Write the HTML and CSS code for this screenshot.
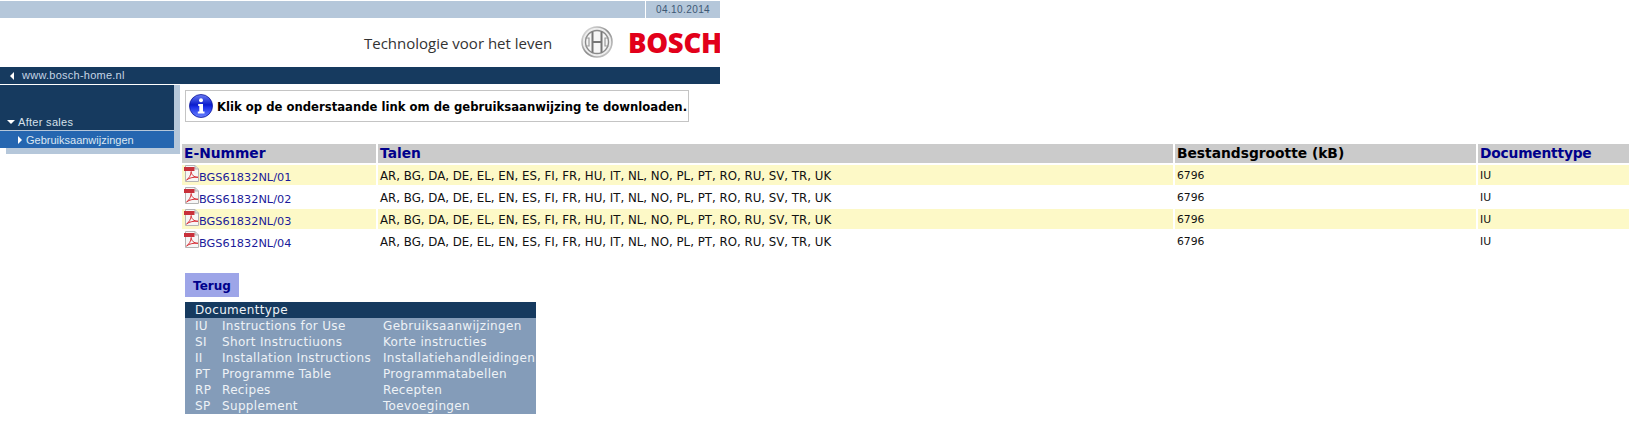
FILE: index.html
```html
<!DOCTYPE html>
<html lang="nl">
<head>
<meta charset="utf-8">
<title>Gebruiksaanwijzingen</title>
<link rel="stylesheet" href="styles.css">
</head>
<body>
<header class="header">
  <div class="datebar"><span class="date">04.10.2014</span></div>
  <div class="brand">
    <span class="slogan">Technologie voor het leven</span>
    <svg class="armature" viewBox="0 0 32 32" aria-hidden="true">
      <defs>
        <linearGradient id="ring" x1="0" y1="0" x2="1" y2="1">
          <stop offset="0" stop-color="#ececec"/><stop offset=".5" stop-color="#8c8c8c"/><stop offset="1" stop-color="#d4d4d4"/>
        </linearGradient>
      </defs>
      <circle cx="16" cy="16" r="15" fill="#ededed" stroke="url(#ring)" stroke-width="1.600"/>
      <circle cx="16" cy="16" r="11.500" fill="#f6f6f6" stroke="#8a8a8a" stroke-width="1.400"/>
      <path d="M11.500 5.500V26.500M20.500 5.500V26.500M11.500 16H20.500" fill="none" stroke="#777" stroke-width="2"/>
      <path d="M4.500 12H8V20H4.500M27.500 12H24V20H27.500" fill="none" stroke="#999" stroke-width="1.200"/>
    </svg>
    <span class="logo">BOSCH</span>
  </div>
  <nav class="sitebar"><span class="arrow-left"></span><a class="sitelink">www.bosch-home.nl</a></nav>
</header>
<div class="main">
  <aside class="side">
    <div class="menu">
      <div class="menu-head"><span class="arrow-down"></span><span class="menu-label">After sales</span></div>
      <div class="menu-item"><span class="arrow-right"></span><span>Gebruiksaanwijzingen</span></div>
    </div>
  </aside>
  <main class="content">
    <div class="notice">
      <svg class="info" viewBox="0 0 24 24" aria-hidden="true">
        <defs>
          <linearGradient id="blue" x1="0" y1="0" x2="0" y2="1">
            <stop offset="0" stop-color="#6a7cf4"/><stop offset=".45" stop-color="#0a1ccc"/><stop offset=".55" stop-color="#1c30e8"/><stop offset="1" stop-color="#6a84ff"/>
          </linearGradient>
        </defs>
        <circle cx="12" cy="12" r="11.500" fill="url(#blue)" stroke="#10189a" stroke-width=".8"/>
        <circle cx="12" cy="6.200" r="2" fill="#fff"/>
        <path d="M9.200 10H14V17.500H15.500V19.500H8.800V17.500H10.300V12H9.200Z" fill="#fff"/>
      </svg>
      <b class="notice-text">Klik op de onderstaande link om de gebruiksaanwijzing te downloaden.</b>
    </div>
    <table class="files">
      <colgroup><col class="c1"><col class="c2"><col class="c3"><col class="c4"></colgroup>
      <thead>
        <tr><th class="link">E-Nummer</th><th class="link">Talen</th><th>Bestandsgrootte (kB)</th><th class="link doctype">Documenttype</th></tr>
      </thead>
      <tbody>
        <tr class="odd"><td class="numcell"><a class="num"><svg class="pdf" viewBox="0 0 16 17" aria-hidden="true"><use href="#pdf-icon"/></svg><span class="code">BGS61832NL/01</span></a></td><td class="langs">AR, BG, DA, DE, EL, EN, ES, FI, FR, HU, IT, NL, NO, PL, PT, RO, RU, SV, TR, UK</td><td>6796</td><td>IU</td></tr>
        <tr><td class="numcell"><a class="num"><svg class="pdf" viewBox="0 0 16 17" aria-hidden="true"><use href="#pdf-icon"/></svg><span class="code">BGS61832NL/02</span></a></td><td class="langs">AR, BG, DA, DE, EL, EN, ES, FI, FR, HU, IT, NL, NO, PL, PT, RO, RU, SV, TR, UK</td><td>6796</td><td>IU</td></tr>
        <tr class="odd"><td class="numcell"><a class="num"><svg class="pdf" viewBox="0 0 16 17" aria-hidden="true"><use href="#pdf-icon"/></svg><span class="code">BGS61832NL/03</span></a></td><td class="langs">AR, BG, DA, DE, EL, EN, ES, FI, FR, HU, IT, NL, NO, PL, PT, RO, RU, SV, TR, UK</td><td>6796</td><td>IU</td></tr>
        <tr><td class="numcell"><a class="num"><svg class="pdf" viewBox="0 0 16 17" aria-hidden="true"><use href="#pdf-icon"/></svg><span class="code">BGS61832NL/04</span></a></td><td class="langs">AR, BG, DA, DE, EL, EN, ES, FI, FR, HU, IT, NL, NO, PL, PT, RO, RU, SV, TR, UK</td><td>6796</td><td>IU</td></tr>
      </tbody>
    </table>
    <a class="back">Terug</a>
    <table class="legend">
      <colgroup><col class="l1"><col class="l2"><col class="l3"></colgroup>
      <thead><tr><th colspan="3">Documenttype</th></tr></thead>
      <tbody>
        <tr><td>IU</td><td>Instructions for Use</td><td>Gebruiksaanwijzingen</td></tr>
        <tr><td>SI</td><td>Short Instructiuons</td><td>Korte instructies</td></tr>
        <tr><td>II</td><td>Installation Instructions</td><td>Installatiehandleidingen</td></tr>
        <tr><td>PT</td><td>Programme Table</td><td>Programmatabellen</td></tr>
        <tr><td>RP</td><td>Recipes</td><td>Recepten</td></tr>
        <tr><td>SP</td><td>Supplement</td><td>Toevoegingen</td></tr>
      </tbody>
    </table>
  </main>
</div>
<svg class="defs" aria-hidden="true">
  <symbol id="pdf-icon" viewBox="0 0 16 17">
    <path d="M1.500.5H11L14.500 4V16.500H1.500Z" fill="#f6f6f6" stroke="#b4b4b4"/>
    <path d="M11 .5V4H14.500" fill="#ddd" stroke="#b4b4b4"/>
    <rect x="0" y="2" width="10.500" height="4" fill="#c8303a"/>
    <path d="M2.500 15C5 13.500 7 10 7.200 6.500C7.500 10 9.500 12 14 12.300C10 12 5.500 12.500 2.500 15Z" fill="none" stroke="#d8333a"/>
  </symbol>
</svg>
</body>
</html>
```
FILE: styles.css
```css
html, body { margin: 0; padding: 0; background: #fff; }
body { font-family: "DejaVu Sans", Verdana, sans-serif; font-size: 11px; color: #000; padding-top: 1px; }
.defs { display: none; }

.header { width: 720px; }
.datebar { height: 17px; background: #b5c7da; display: flex; justify-content: flex-end; }
.date { width: 75px; border-left: 1px solid #fff; box-sizing: border-box; padding-left: 10px; font: 10px/17px "Liberation Sans", Arial, sans-serif; letter-spacing: .4px; color: #3d5875; }
.brand { height: 49px; display: flex; align-items: center; overflow: hidden; padding-left: 364px; }
.slogan { flex: none; width: 217px; font: 15px/20px "Open Sans", sans-serif; color: #333; }
.armature { width: 32px; height: 32px; flex: none; margin-bottom: 2px; }
.logo { flex: none; margin-left: 15px; font: 800 27.5px/30px "Open Sans", sans-serif; letter-spacing: -.3px; color: #e2001a; white-space: nowrap; }
.sitebar { height: 17px; background: #163a5f; display: flex; align-items: center; padding-left: 10px; }
.arrow-left { width: 0; height: 0; border: 4px solid transparent; border-left: 0; border-right: 4px solid #fff; margin-right: 8px; }
.sitelink { font: 11px/17px "Liberation Sans", Arial, sans-serif; letter-spacing: .25px; color: #c5d5e5; }

.main { display: flex; margin-top: 1px; align-items: flex-start; }
.side { flex: none; width: 168px; margin-left: 6px; background: #b5c7da; padding: 0 6px 6px 0; }
.menu { margin-left: -6px; width: 174px; height: 63px; background: #163a5f; display: flex; flex-direction: column; justify-content: flex-end; color: #d5e0ea; font-family: "Liberation Sans", Arial, sans-serif; }
.menu-head { height: 18px; box-sizing: border-box; padding: 2px 0 0 7px; display: flex; align-items: center; font-size: 11px; letter-spacing: .3px; }
.menu-label { flex: 1; }
.arrow-down { width: 0; height: 0; border: 4px solid transparent; border-bottom: 0; border-top: 4px solid #fff; margin-right: 3px; }
.menu-item { height: 17px; background: #2566b0; border-top: 1px solid #b5c7da; display: flex; align-items: center; padding-left: 18px; font-size: 11px; color: #dbe6f2; }
.arrow-right { width: 0; height: 0; border: 4px solid transparent; border-right: 0; border-left: 4px solid #fff; margin-right: 4px; }

.content { flex: 1; min-width: 0; }
.notice { margin: 5px 0 0 5px; width: 504px; height: 32px; box-sizing: border-box; border: 1px solid #c4c4c4; display: flex; align-items: center; padding-left: 3px; }
.info { width: 24px; height: 24px; flex: none; }
.notice-text { margin: 2px 0 0 4px; font-size: 11.65px; color: #000; white-space: nowrap; }

.files { margin-top: 20px; width: 1449px; border-collapse: separate; border-spacing: 2px; table-layout: fixed; }
.c1 { width: 194px; } .c2 { width: 795px; } .c3 { width: 301px; } .c4 { width: 151px; }
.files th { height: 19px; padding: 0 0 0 2px; background: #cbcbcb; text-align: left; font-size: 13.8px; line-height: 19px; color: #000; }
.files th.link { color: #00008b; }
.files th.doctype { letter-spacing: -.2px; }
.files td { height: 18px; padding: 2px 0 0 2px; font-size: 10.8px; line-height: 18px; color: #111; white-space: nowrap; overflow: hidden; vertical-align: top; }
.files .odd td { background: #fdf9c7; }
.files td.langs { font-size: 11.8px; }
.files td.numcell { height: 20px; padding-top: 0; }
.num { display: flex; height: 20px; align-items: flex-start; color: #1a1a9a; }
.pdf { width: 16px; height: 17px; flex: none; }
.code { font-size: 11.3px; line-height: 15px; margin: 5px 0 0 -1px; }

.back { display: block; width: 54px; height: 24px; margin: 20px 0 5px 5px; background: #9da5e8; color: #00008b; font-weight: bold; font-size: 12px; line-height: 26px; text-align: center; }
.legend { margin-left: 5px; width: 351px; height: 112px; border-collapse: collapse; background: #849cb9; color: #eef2f6; font-size: 12px; letter-spacing: .33px; table-layout: fixed; }
.l1 { width: 37px; } .l2 { width: 161px; } .l3 { width: 153px; }
.legend th { height: 16px; padding: 0 0 0 10px; background: #163a5f; text-align: left; font-weight: normal; line-height: 16px; color: #eef2f6; }
.legend td { height: 16px; padding: 0; line-height: 16px; white-space: nowrap; }
.legend td:first-child { padding-left: 10px; }
```
